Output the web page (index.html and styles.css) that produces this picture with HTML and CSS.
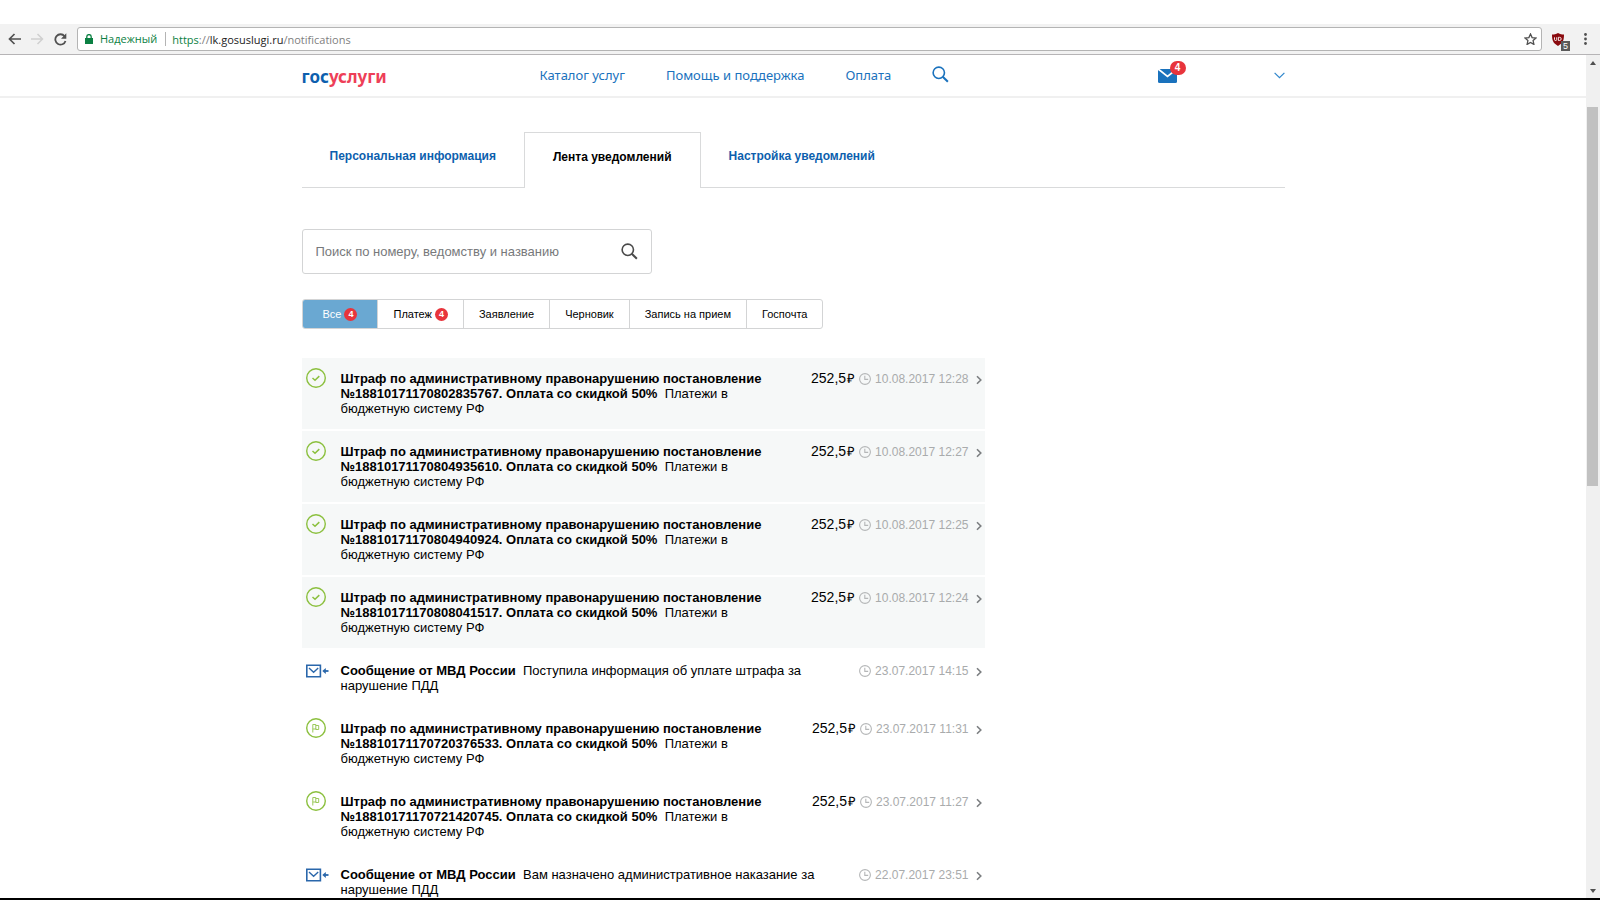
FILE: index.html
```html
<!DOCTYPE html>
<html lang="ru">
<head>
<meta charset="utf-8">
<title>Лента уведомлений</title>
<link rel="stylesheet" href="styles.css">
</head>
<body>
<svg class="sprite" aria-hidden="true">
  <symbol id="check" viewBox="0 0 20 20"><circle cx="10" cy="10" r="9.3" fill="none" stroke="#8cc03f" stroke-width="1.4"/><path d="M6.5 10l2.5 2.3 4.3-4.2" fill="none" stroke="#8cc03f" stroke-width="1.5"/></symbol>
  <symbol id="flag" viewBox="0 0 20 20"><circle cx="10" cy="10" r="9.3" fill="none" stroke="#8cc03f" stroke-width="1.4"/><path d="M6.8 14.500V6.5h3v4.500h-3M9.800 7.5h2.900v4H9.800v-1" fill="none" stroke="#9cc95a" stroke-width="1"/></symbol>
  <symbol id="letter" viewBox="0 0 23 14"><path d="M.8 1.3h13.6v11.4H.8z" fill="none" stroke="#2a67ab" stroke-width="1.6"/><path d="M3 4l4.6 4.2L12.2 4" fill="none" stroke="#2a67ab" stroke-width="1.4"/><path d="M22.5 7H18" stroke="#2a67ab" stroke-width="1.8"/><path d="M16.3 7l3.5-3v6z" fill="#2a67ab"/></symbol>
  <symbol id="clock" viewBox="0 0 12 12"><circle cx="6" cy="6" r="5.4" fill="none" stroke="#b5b7b8" stroke-width="1.1"/><path d="M5.8 2.8v3.6h3.4" fill="none" stroke="#b5b7b8" stroke-width="1.1"/></symbol>
  <symbol id="next" viewBox="0 0 6 10"><path d="M1 1.2L4.8 5 1 8.8" fill="none" stroke="#7b7e80" stroke-width="1.6"/></symbol>
  <symbol id="lens" viewBox="0 0 18 18"><circle cx="7.2" cy="7.2" r="6" fill="none" stroke="currentColor" stroke-width="1.7"/><path d="M11.4 11.4l5.4 5.2" stroke="currentColor" stroke-width="2.2"/></symbol>
</svg>
<div class="top-strip"></div>
<div class="toolbar">
  <button class="tool" aria-label="Назад"><svg width="13" height="12" viewBox="0 0 13 12" fill="none" stroke="#505050" stroke-width="1.7"><path d="M13 6H1.5M6.5 1l-5 5 5 5"/></svg></button>
  <button class="tool" aria-label="Вперёд"><svg width="13" height="12" viewBox="0 0 13 12" fill="none" stroke="#d0d0d0" stroke-width="1.5"><path d="M0 6h11.5M6.5 1l5 5-5 5"/></svg></button>
  <button class="tool" aria-label="Обновить"><svg width="13" height="13" viewBox="0 0 13 13"><path d="M10.6 3.2A5.2 5.2 0 1 0 11.5 8" fill="none" stroke="#505050" stroke-width="1.8"/><path d="M12.3.3v5.4H7z" fill="#505050"/></svg></button>
  <div class="address">
    <svg class="lock" width="8" height="10" viewBox="0 0 8 10"><path d="M0 4h8v6H0z" fill="#0b8043"/><path d="M1.8 4.5V2.8a2.2 2.2 0 0 1 4.4 0v1.7" fill="none" stroke="#0b8043" stroke-width="1.3"/></svg>
    <span class="secure">Надежный</span>
    <span class="url"><span class="scheme">https</span>://<span class="host">lk.gosuslugi.ru</span>/notifications</span>
    <svg class="star" width="13" height="12" viewBox="0 0 13 12"><path d="M6.5 1l1.6 3.6 3.9.4-2.9 2.6.8 3.8-3.4-2-3.4 2 .8-3.8L1 5l3.9-.4z" fill="none" stroke="#505050" stroke-width="1.3"/></svg>
  </div>
  <span class="ext"><svg width="12" height="13" viewBox="0 0 12 13"><path d="M6 0c2 1.3 4 1.6 6 1.6 0 5.800-1 8.700-6 11.400C1 10.300 0 7.400 0 1.600 2 1.600 4 1.300 6 0z" fill="#8a0a0e"/><path d="M2.500 4.300v2.200q0 1 1.100 1t1.100-1V4.300M6.400 4.300v3.200h1q1.800 0 1.800-1.600T7.400 4.300z" fill="none" stroke="#fff" stroke-width=".9"/></svg><b class="ext-count">5</b></span>
  <button class="tool dots" aria-label="Меню"><svg width="3" height="12" viewBox="0 0 3 12" fill="#505050"><circle cx="1.500" cy="1.500" r="1.400"/><circle cx="1.500" cy="6" r="1.400"/><circle cx="1.500" cy="10.500" r="1.400"/></svg></button>
</div>
<div class="viewport">
  <div class="page">
    <header class="header">
      <div class="wrap header-row">
        <a class="logo" href="#"><span class="logo-blue">гос</span>услуги</a>
        <nav class="nav">
          <a href="#">Каталог услуг</a>
          <a href="#">Помощь и поддержка</a>
          <a href="#">Оплата</a>
          <a href="#" aria-label="Поиск"><svg width="17" height="17"><use href="#lens"/></svg></a>
        </nav>
        <a class="mail" href="#" aria-label="Сообщения"><svg width="19" height="14" viewBox="0 0 19 14"><rect width="19" height="14" rx="1.500" fill="#1a72bd"/><path d="M0-.2l9.500 7.600L19-.2" fill="none" stroke="#fff" stroke-width="1.700"/></svg><b class="mail-count">4</b></a>
        <button class="user" aria-label="Профиль"><svg width="11" height="7" viewBox="0 0 11 7"><path d="M.6.800l4.900 4.900L10.400.800" fill="none" stroke="#2f86cc" stroke-width="1.200"/></svg></button>
      </div>
    </header>
    <main class="wrap">
      <nav class="tabs">
        <a class="tab" href="#">Персональная информация</a>
        <a class="tab tab-active" href="#">Лента уведомлений</a>
        <a class="tab" href="#">Настройка уведомлений</a>
      </nav>
      <form class="search">
        <input type="text" aria-label="Поиск" placeholder="Поиск по номеру, ведомству и названию">
        <button class="search-go" type="button" aria-label="Найти"><svg width="17" height="17"><use href="#lens"/></svg></button>
      </form>
      <div class="filters">
        <button class="filter filter-active">Все <b class="count">4</b></button>
        <button class="filter">Платеж <b class="count">4</b></button>
        <button class="filter">Заявление</button>
        <button class="filter">Черновик</button>
        <button class="filter">Запись на прием</button>
        <button class="filter">Госпочта</button>
      </div>
      <div class="feed">
        <a class="item unread" href="#"><svg class="mark" width="20" height="20"><use href="#check"/></svg><span class="text"><b>Штраф по административному правонарушению постановление №18810171170802835767. Оплата со скидкой 50%</b>&nbsp; Платежи в бюджетную систему РФ</span><span class="price">252,5<span class="rub">₽</span></span><svg class="clock" width="12" height="12"><use href="#clock"/></svg><span class="date">10.08.2017 12:28</span><svg class="next" width="6" height="10"><use href="#next"/></svg></a>
        <a class="item unread" href="#"><svg class="mark" width="20" height="20"><use href="#check"/></svg><span class="text"><b>Штраф по административному правонарушению постановление №18810171170804935610. Оплата со скидкой 50%</b>&nbsp; Платежи в бюджетную систему РФ</span><span class="price">252,5<span class="rub">₽</span></span><svg class="clock" width="12" height="12"><use href="#clock"/></svg><span class="date">10.08.2017 12:27</span><svg class="next" width="6" height="10"><use href="#next"/></svg></a>
        <a class="item unread" href="#"><svg class="mark" width="20" height="20"><use href="#check"/></svg><span class="text"><b>Штраф по административному правонарушению постановление №18810171170804940924. Оплата со скидкой 50%</b>&nbsp; Платежи в бюджетную систему РФ</span><span class="price">252,5<span class="rub">₽</span></span><svg class="clock" width="12" height="12"><use href="#clock"/></svg><span class="date">10.08.2017 12:25</span><svg class="next" width="6" height="10"><use href="#next"/></svg></a>
        <a class="item unread" href="#"><svg class="mark" width="20" height="20"><use href="#check"/></svg><span class="text"><b>Штраф по административному правонарушению постановление №18810171170808041517. Оплата со скидкой 50%</b>&nbsp; Платежи в бюджетную систему РФ</span><span class="price">252,5<span class="rub">₽</span></span><svg class="clock" width="12" height="12"><use href="#clock"/></svg><span class="date">10.08.2017 12:24</span><svg class="next" width="6" height="10"><use href="#next"/></svg></a>
        <a class="item" href="#"><svg class="mark mark-letter" width="23" height="14"><use href="#letter"/></svg><span class="text"><b>Сообщение от МВД России</b>&nbsp; Поступила информация об уплате штрафа за нарушение ПДД</span><svg class="clock" width="12" height="12"><use href="#clock"/></svg><span class="date">23.07.2017 14:15</span><svg class="next" width="6" height="10"><use href="#next"/></svg></a>
        <a class="item" href="#"><svg class="mark" width="20" height="20"><use href="#flag"/></svg><span class="text"><b>Штраф по административному правонарушению постановление №18810171170720376533. Оплата со скидкой 50%</b>&nbsp; Платежи в бюджетную систему РФ</span><span class="price">252,5<span class="rub">₽</span></span><svg class="clock" width="12" height="12"><use href="#clock"/></svg><span class="date">23.07.2017 11:31</span><svg class="next" width="6" height="10"><use href="#next"/></svg></a>
        <a class="item" href="#"><svg class="mark" width="20" height="20"><use href="#flag"/></svg><span class="text"><b>Штраф по административному правонарушению постановление №18810171170721420745. Оплата со скидкой 50%</b>&nbsp; Платежи в бюджетную систему РФ</span><span class="price">252,5<span class="rub">₽</span></span><svg class="clock" width="12" height="12"><use href="#clock"/></svg><span class="date">23.07.2017 11:27</span><svg class="next" width="6" height="10"><use href="#next"/></svg></a>
        <a class="item" href="#"><svg class="mark mark-letter" width="23" height="14"><use href="#letter"/></svg><span class="text"><b>Сообщение от МВД России</b>&nbsp; Вам назначено административное наказание за нарушение ПДД</span><svg class="clock" width="12" height="12"><use href="#clock"/></svg><span class="date">22.07.2017 23:51</span><svg class="next" width="6" height="10"><use href="#next"/></svg></a>
      </div>
    </main>
  </div>
  <div class="scrollbar">
    <svg width="8" height="4" viewBox="0 0 8 4"><path d="M1 4l3-4 3 4z" fill="#505050"/></svg>
    <div class="track"><div class="thumb"></div></div>
    <svg width="8" height="4" viewBox="0 0 8 4"><path d="M1 0l3 4 3-4z" fill="#505050"/></svg>
  </div>
</div>
</body>
</html>
```

FILE: styles.css
```css
* { box-sizing: border-box; }
body {
  margin: 0;
  height: 100vh;
  display: flex;
  flex-direction: column;
  overflow: hidden;
  border-bottom: 2px solid #000;
  background: #fff;
  color: #000;
  font-family: "Liberation Sans", Arial, sans-serif;
  font-size: 14px;
}
a { color: inherit; text-decoration: none; }
button { border: 0; padding: 0; background: none; font: inherit; color: inherit; }
svg { display: block; flex: none; }
.sprite { position: absolute; width: 0; height: 0; }

.top-strip { flex: none; height: 24px; }
.toolbar {
  flex: none;
  display: flex;
  align-items: center;
  gap: 10px;
  height: 31px;
  padding: 0 13px 0 8px;
  background: #f2f2f2;
  border-bottom: 1px solid #b6b4b6;
}
.address {
  flex: 1;
  display: flex;
  align-items: center;
  height: 24px;
  padding: 0 4px 0 7px;
  background: #fff;
  border: 1px solid #b4b4b4;
  border-radius: 3px;
  font: 11px "Open Sans", sans-serif;
}
.secure { margin-left: 7px; padding-right: 8px; color: #0b8043; border-right: 1px solid #b4b4b4; line-height: 14px; }
.url { flex: 1; margin-left: 6px; color: #808080; }
.scheme { color: #0b8043; }
.host { color: #222; }
.tool { width: 13px; }
.dots { width: 3px; margin-left: 10px; }
.ext { position: relative; }
.ext-count {
  position: absolute;
  left: 9px;
  top: 8px;
  width: 9px;
  background: #5a5a5a;
  color: #fff;
  font: 9px/10px "Liberation Sans", sans-serif;
  text-align: center;
}

.viewport { flex: 1; display: flex; min-height: 0; }
.page { flex: 1; overflow: hidden; }
.wrap { max-width: 983px; margin: 0 auto; }
.header { border-bottom: 2px solid #f0f0f0; }
.header-row { display: flex; align-items: center; height: 41px; }
.logo { width: 238px; padding-top: 3px; color: #ee3f58; font: bold 17px/22px "Noto Sans", sans-serif; }
.logo-blue { color: #0d5fae; }
.nav { flex: 1; display: flex; align-items: center; gap: 41px; padding-bottom: 2px; color: #1a72bd; font: 13px/20px "Noto Sans", sans-serif; }
.mail { position: relative; margin-right: 97px; }
.mail-count {
  position: absolute;
  left: 12px;
  top: -8px;
  width: 16px;
  border-radius: 7px;
  background: #e8343c;
  color: #fff;
  font: bold 10px/14px "Liberation Sans", sans-serif;
  text-align: center;
}

.tabs { display: flex; margin-top: 34px; height: 56px; font-weight: bold; font-size: 12px; color: #0d5fae; box-shadow: inset 0 -1px #d9dadb; }
.tab { padding: 0 28px; line-height: 48px; }
.tab-active { color: #000; background: #fff; border: 1px solid #d9dadb; border-bottom: 0; }

.search {
  display: flex;
  align-items: center;
  width: 350px;
  height: 45px;
  margin-top: 41px;
  padding: 0 13px;
  border: 1px solid #d3d4d5;
  border-radius: 3px;
}
.search input { flex: 1; border: 0; padding: 0; outline: 0; background: none; font: 13px "Liberation Sans", sans-serif; }
.search input::placeholder { color: #77797b; }
.search-go { color: #4a4a4a; }

.filters { display: flex; width: max-content; height: 30px; margin-top: 25px; border: 1px solid #d3d4d5; border-radius: 3px; overflow: hidden; font-size: 11px; }
.filter { display: flex; align-items: center; gap: 3px; padding: 0 15px; white-space: nowrap; }
.filter + .filter { border-left: 1px solid #d3d4d5; }
.filter-active { padding: 0 20px; background: #6aa8d2; color: #fff; }
.count { width: 13px; border-radius: 50%; background: #e8343c; color: #fff; font: bold 9px/13px "Liberation Sans", sans-serif; text-align: center; }

.feed { display: flex; flex-direction: column; gap: 2px; max-width: 683px; margin-top: 29px; }
.item { display: flex; align-items: flex-start; padding: 13px 3px 13px 4px; line-height: 15px; }
.unread { background: #f6f8f8; }
.mark { margin: -3px 15px 0 0; }
.mark-letter { margin: 1px 12px 0 0; }
.text { flex: 1; font-size: 13px; }
.price { margin-left: 20px; }
.rub { margin-left: 1px; font-size: 13px; }
.clock { margin: 2px 4px 0; }
.date { color: #a9abac; font-size: 12px; line-height: 17px; }
.next { margin: 4px 0 0 7px; }

.scrollbar { display: flex; flex-direction: column; align-items: center; width: 14px; padding: 6px 0 5px; background: #f0f0f0; }
.track { flex: 1; align-self: stretch; padding: 42px 2px 0 1px; }
.thumb { height: 48.5%; background: #c1c1c1; }
```
